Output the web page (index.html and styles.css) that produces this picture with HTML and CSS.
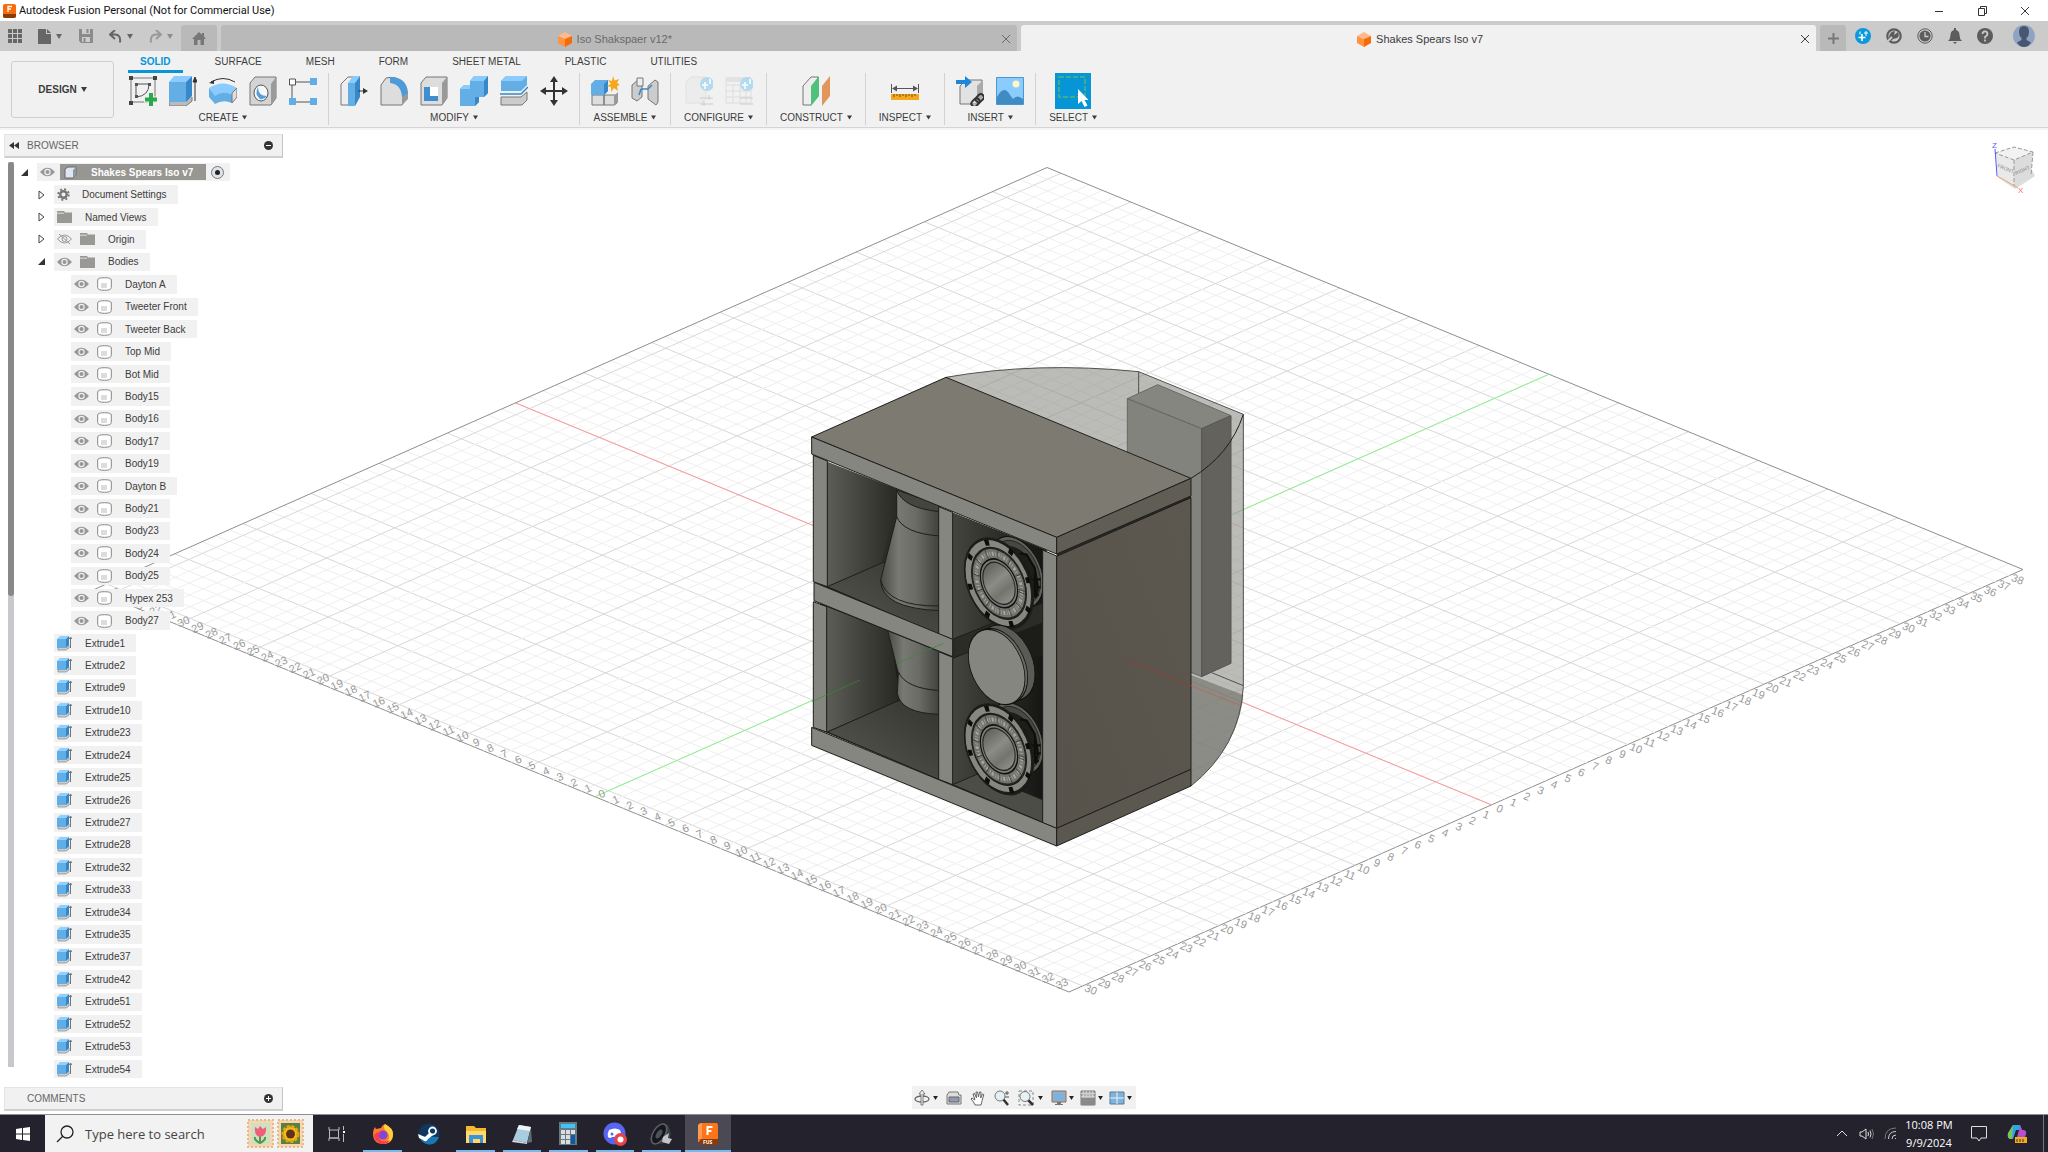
FILE: index.html
```
<!DOCTYPE html>
<html lang="en">
<head>
  <meta charset="UTF-8" />
  <meta name="viewport" content="width=device-width, initial-scale=1.0"/>
  <title>Autodesk Fusion Personal (Not for Commercial Use)</title>
  <link rel="stylesheet" href="styles.css">
</head>
<body>
  <!-- Shared icons -->
  <svg class="defs" width="0" height="0" aria-hidden="true">
    <symbol id="i-eye" viewBox="0 0 15 10"><path d="M0 5Q7.500-3.500 15 5Q7.500 13.500 0 5Z" fill="#979797"/><circle cx="7.500" cy="5" r="3.200" fill="#f1f1f1"/><circle cx="7.500" cy="5" r="2" fill="#979797"/></symbol>
    <symbol id="i-eye-off" viewBox="0 0 15 10"><path d="M.5 5Q7.500-3 14.500 5Q7.500 13 .5 5Z" fill="none" stroke="#999"/><circle cx="7.500" cy="5" r="2.500" fill="none" stroke="#999"/><path d="M2 0L13 10" stroke="#999"/></symbol>
    <symbol id="i-folder" viewBox="0 0 15 12"><path d="M0 0h7l1 1.500h7V12H0Z" fill="#999895"/><path d="M0 2.200h7" stroke="#f1f1f1" stroke-width=".8"/></symbol>
    <symbol id="i-body" viewBox="0 0 15 14"><path d="M.7 3Q.7.7 7.500.7T14.300 3v7.500q0 2.800-6.800 2.800T.7 10.500Z" fill="#fff" stroke="#888"/><path d="M4 6h6v5H4z" fill="#dcdcdc"/></symbol>
    <symbol id="i-extrude-s" viewBox="0 0 15 15"><path d="M1 12v2h8l3-2V9" fill="#ccc" stroke="#888" stroke-width=".7"/><path d="M0 3h9v9H0z" fill="#5faee8"/><path d="M0 3L3 0h9L9 3z" fill="#8fd0ff"/><path d="M9 3l3-3v9l-3 3z" fill="#3486c8"/><path d="M13.500 2v10M12 3l1.500-2L15 3" stroke="#555" fill="none" stroke-width=".8"/></symbol>
    <symbol id="i-gear" viewBox="0 0 14 14"><circle cx="7" cy="7" r="3.500" fill="none" stroke="#777" stroke-width="2.600"/><circle cx="7" cy="7" r="5.700" fill="none" stroke="#777" stroke-width="2" stroke-dasharray="2.200 2.270"/></symbol>
    <symbol id="i-open" viewBox="0 0 7 7"><path d="M7 0v7H0z" fill="#333"/></symbol>
    <symbol id="i-closed" viewBox="0 0 7 10"><path d="M1 1l5 4-5 4z" fill="#fff" stroke="#444"/></symbol>
    <symbol id="i-cube" viewBox="0 0 14 15"><path d="M0 4L7 0l7 4-7 3z" fill="#ffb98a"/><path d="M0 4l7 3v8l-7-4z" fill="#ff9440"/><path d="M14 4L7 7v8l7-4z" fill="#f76a08"/></symbol>
    <symbol id="i-x" viewBox="0 0 10 10"><path d="M1 1l8 8M9 1L1 9" stroke="currentColor" fill="none"/></symbol>
    <symbol id="i-down" viewBox="0 0 6 5"><path d="M0 0h6L3 5z" fill="currentColor"/></symbol>
  </svg>

  <header class="title-bar">
    <svg width="13" height="14" viewBox="0 0 13 14"><rect width="13" height="14" rx="2" fill="#f76b0a"/><path d="M0 10h13v2a2 2 0 0 1-2 2H2a2 2 0 0 1-2-2z" fill="#8a3a06"/><path d="M5 8V2.500h4M5 5h3" stroke="#fff" stroke-width="1.300" fill="none"/></svg>
    <h1>Autodesk Fusion Personal (Not for Commercial Use)</h1>
    <div class="window-buttons">
      <button type="button" aria-label="Minimize"><svg width="10" height="10"><path d="M1 5.500h8" stroke="#333"/></svg></button>
      <button type="button" aria-label="Restore"><svg width="10" height="10"><path d="M1.500 2.500h6v7h-6zM3.500 2.500v-2h6v7h-2" fill="none" stroke="#333"/></svg></button>
      <button type="button" aria-label="Close"><svg width="10" height="10"><use href="#i-x"/></svg></button>
    </div>
  </header>

  <div class="tab-bar">
    <div class="quick-access">
      <button type="button" aria-label="Data panel"><svg width="14" height="14" viewBox="0 0 14 14" fill="#666"><path d="M0 0h4v4H0zM5 0h4v4H5zM10 0h4v4h-4zM0 5h4v4H0zM5 5h4v4H5zM10 5h4v4h-4zM0 10h4v4H0zM5 10h4v4H5zM10 10h4v4h-4z"/></svg></button>
      <button type="button" class="with-arrow" aria-label="File"><svg width="13" height="15" viewBox="0 0 13 15"><path d="M0 0h8v5h5v10H0zM9 0l4 4H9z" fill="#666"/></svg><svg class="arrow" width="6" height="5"><use href="#i-down"/></svg></button>
      <button type="button" aria-label="Save"><svg width="14" height="14" viewBox="0 0 14 14"><path d="M0 0h14v14H2l-2-2z" fill="#8b8b8b"/><path d="M3 0h8v5H3zM3 8h8v5H3z" fill="#ccc"/><path d="M4.500 9h2v4h-2zM7.500 0h2v4h-2z" fill="#8b8b8b"/></svg></button>
      <button type="button" class="with-arrow" aria-label="Undo"><svg width="13" height="13" viewBox="0 0 13 13"><path d="M6 0L1 4.500 6 9M1 4.500h5q6 0 5 8" fill="none" stroke="#666" stroke-width="2"/></svg><svg class="arrow" width="6" height="5"><use href="#i-down"/></svg></button>
      <button type="button" class="with-arrow dim" aria-label="Redo"><svg width="13" height="13" viewBox="0 0 13 13"><path d="M7 0l5 4.500L7 9M12 4.500H7q-6 0-5 8" fill="none" stroke="#999" stroke-width="2"/></svg><svg class="arrow" width="6" height="5"><use href="#i-down"/></svg></button>
    </div>
    <button type="button" class="home-tab" aria-label="Home"><svg width="14" height="13" viewBox="0 0 14 13"><path d="M7 0l3 2.800V1h2v3.600L14 7h-2v6H8.500V8h-3v5H2V7H0z" fill="#777"/></svg></button>
    <div class="doc-tab">
      <svg width="14" height="15"><use href="#i-cube"/></svg><span>Iso Shakspaer v12*</span>
      <button type="button" aria-label="Close tab"><svg width="10" height="10"><use href="#i-x"/></svg></button>
    </div>
    <div class="doc-tab active">
      <svg width="14" height="15"><use href="#i-cube"/></svg><span>Shakes Spears Iso v7</span>
      <button type="button" aria-label="Close tab"><svg width="10" height="10"><use href="#i-x"/></svg></button>
    </div>
    <button type="button" class="new-tab" aria-label="New tab"><svg width="13" height="13"><path d="M6.500 1v11M1 6.500h11" stroke="#777" stroke-width="2"/></svg></button>
    <div class="account">
      <button type="button" aria-label="Extensions"><svg width="16" height="16" viewBox="0 0 16 16"><circle cx="8" cy="8" r="8" fill="#0d98dc"/><path d="M7 6v7M3.500 9.500h7" stroke="#fff" stroke-width="1.600"/><path d="M5 3.500v3M11 3v5M9 5h4" stroke="#fff"/></svg></button>
      <button type="button" aria-label="Updates"><svg width="16" height="16" viewBox="0 0 16 16"><circle cx="8" cy="8" r="6.700" fill="none" stroke="#5c5c5c" stroke-width="2.200"/><path d="M3 9q1-6 6-6l-1 4 4-3q2 4-1 6l-4 1-3 3z" fill="#5c5c5c"/><path d="M2 13l4-4" stroke="#ccc" stroke-width="2"/></svg></button>
      <button type="button" aria-label="Job status"><svg width="16" height="16" viewBox="0 0 16 16"><circle cx="8" cy="8" r="7.200" fill="none" stroke="#5c5c5c"/><circle cx="8" cy="8" r="5.600" fill="#5c5c5c"/><path d="M8 4v4.500h3.500" stroke="#ccc" stroke-width="1.300" fill="none"/></svg></button>
      <button type="button" aria-label="Notifications"><svg width="14" height="16" viewBox="0 0 14 16"><path d="M6 0h2v2q3.500 1 3.500 5 0 4 2.500 6H0q2.500-2 2.500-6Q2.500 3 6 2zM5 14h4l-2 2z" fill="#5c5c5c"/></svg></button>
      <button type="button" aria-label="Help"><svg width="16" height="16" viewBox="0 0 16 16"><circle cx="8" cy="8" r="8" fill="#5c5c5c"/><path d="M5.500 6q0-2.700 2.500-2.700T10.500 6Q10.500 7.500 8 9v1.500M8 11.500v2" stroke="#ccc" stroke-width="1.700" fill="none"/></svg></button>
      <button type="button" class="avatar" aria-label="Profile"><svg width="22" height="22" viewBox="0 0 22 22"><circle cx="11" cy="11" r="11" fill="#8fa3c2"/><path d="M11 1q5 0 5 6 0 4-2.500 6v2l4.500 2.500Q15 22 11 22t-7-4.500L8.500 15v-2Q6 11 6 7q0-6 5-6z" fill="#485672"/></svg></button>
    </div>
  </div>

  <section class="ribbon">
    <button type="button" class="workspace">DESIGN <svg width="6" height="5"><use href="#i-down"/></svg></button>
    <div class="ribbon-main">
      <nav class="ribbon-tabs">
        <a href="#" class="active">SOLID</a>
        <a href="#">SURFACE</a>
        <a href="#">MESH</a>
        <a href="#">FORM</a>
        <a href="#">SHEET METAL</a>
        <a href="#">PLASTIC</a>
        <a href="#">UTILITIES</a>
      </nav>
      <div class="groups">
        <div class="group">
          <div class="tools">
            <button type="button" aria-label="Create sketch"><svg viewBox="0 0 28 30"><path d="M2 2h24v24H2z" fill="none" stroke="#777"/><g fill="#444"><path d="M0 0h4v4H0zM24 0h4v4h-4zM0 25h4v4H0z"/></g><path d="M7 8h13q0 12-13 13z" fill="none" stroke="#555"/><path d="M6 7h3v3H6zM19 7h3v3h-3zM6 19h3v3H6z" fill="#555"/><path d="M22 15v15M15 23.500h14" stroke="#f1f1f1" stroke-width="6"/><path d="M22 17v13M16 23.500h12" stroke="#2aa84a" stroke-width="4"/></svg></button>
            <button type="button" aria-label="Extrude"><svg viewBox="0 0 28 30"><path d="M0 26v4h17l6-5v-4" fill="#bbb" stroke="#777"/><path d="M0 6h17v20H0z" fill="#64aee6"/><path d="M0 6l5-6h18l-6 6z" fill="#8accff"/><path d="M17 6l6-6v20l-6 6z" fill="#3788c8"/><path d="M26 3v22M24 6l2-5 2 5z" stroke="#333" fill="#333"/></svg></button>
            <button type="button" aria-label="Revolve"><svg viewBox="0 0 28 30"><path d="M2 6Q14-1 26 6" fill="none" stroke="#333"/><path d="M0 7l5-3v4z" fill="#333"/><path d="M0 12Q14 3 28 12l-5 8q-9-5-17 1z" fill="#8accff"/><path d="M0 12l6 8q8-6 17-1v8q-9-4-17 1l-6-7z" fill="#64aee6"/><path d="M23 17l5-5v9l-5 6z" fill="#ddd" stroke="#777"/></svg></button>
            <button type="button" aria-label="Hole"><svg viewBox="0 0 28 30"><path d="M1 7l5-6h21v21l-5 7H1z" fill="#d4d4d4" stroke="#777"/><path d="M22 8l5-7v21l-5 7z" fill="#9a9a9a"/><ellipse cx="12" cy="17" rx="7" ry="8" fill="#f7f7f7" stroke="#555"/><path d="M9 11q0 9 9 9-3 4-7 3-6-5-2-12z" fill="#559fdb"/></svg></button>
            <button type="button" aria-label="Pattern"><svg viewBox="0 0 28 30"><path d="M7 6h14M3 9v13M7 26h14" stroke="#555"/><path d="M.5 3h6v6h-6z" fill="#fff" stroke="#555"/><path d="M21 2h7v7h-7zM0 22h7v7H0zM21 22h7v7h-7z" fill="#5faee8"/></svg></button>
          </div>
          <button type="button" class="menu">CREATE <svg width="5" height="5"><use href="#i-down"/></svg></button>
        </div>
        <div class="group">
          <div class="tools">
            <button type="button" aria-label="Press pull"><svg viewBox="0 0 28 30"><path d="M1 8l7-7h5v20l-5 8H1z" fill="#eee" stroke="#777"/><path d="M8 7h7v23H8z" fill="#64aee6"/><path d="M8 7l5-7h7l-5 7z" fill="#8accff"/><path d="M15 7l5-7v21l-5 9z" fill="#3788c8"/><path d="M18 15h6" stroke="#333"/><path d="M23 12l5 3-5 3z" fill="#333"/></svg></button>
            <button type="button" aria-label="Fillet"><svg viewBox="0 0 28 30"><path d="M1 29V9l5-7q18-4 22 18l-6 9z" fill="#ddd" stroke="#777"/><path d="M22 20l6-4v7l-6 6z" fill="#999"/><path d="M10 1q17 0 18 16l-6 4Q21 8 10 7z" fill="#4d9bd8"/></svg></button>
            <button type="button" aria-label="Shell"><svg viewBox="0 0 28 30"><path d="M1 7l5-6h21v21l-5 7H1z" fill="#ddd" stroke="#777"/><path d="M22 7l5-6v21l-5 7z" fill="#999"/><path d="M4 11h14v14H4z" fill="#fff"/><path d="M4 11h6v9h8v5H4z" fill="#3f8fd0"/></svg></button>
            <button type="button" aria-label="Combine"><svg viewBox="0 0 28 30"><path d="M0 13l4-4h6V5l4-5h14v17l-4 4h-5v5l-4 4H0z" fill="#64aee6"/><path d="M10 5l4-5h14l-4 5zM0 13l4-4h6v4z" fill="#8accff"/><path d="M24 5l4-5v17l-4 4h-5v5l-4 4v-9h9z" fill="#3788c8"/></svg></button>
            <button type="button" aria-label="Split body"><svg viewBox="0 0 28 30"><path d="M1 21h20l6-5v8l-5 5H1z" fill="#ccc" stroke="#777"/><path d="M1 5l5-5h21v9l-6 6H1z" fill="#64aee6"/><path d="M1 5l5-5h21l-5 5z" fill="#8accff"/><path d="M0 18h21l7-7" stroke="#3788c8" fill="none" stroke-width="1.500"/></svg></button>
            <button type="button" aria-label="Move"><svg viewBox="0 0 28 30"><path d="M14 4v22M3 15h22" stroke="#333" stroke-width="2"/><path d="M14 0l4 6h-8zM14 30l4-6h-8zM0 15l6-4v8zM28 15l-6-4v8z" fill="#333"/></svg></button>
          </div>
          <button type="button" class="menu">MODIFY <svg width="5" height="5"><use href="#i-down"/></svg></button>
        </div>
        <div class="group">
          <div class="tools">
            <button type="button" aria-label="New component"><svg viewBox="0 0 28 30"><path d="M1 19h12v10H1zM13 19h13v8l-3 2H13z" fill="#ddd" stroke="#777"/><path d="M23 20l4-4v10l-4 4z" fill="#999"/><path d="M0 8l4-4h13v11l-4 4H0z" fill="#64aee6"/><path d="M13 8l4-4v11l-4 4z" fill="#3788c8"/><path d="M22 0l1.500 4.500L28 3l-2 4 4 2-4 1 1 5-4-3-3 4v-5l-4-1 4-2-3-4 4 1z" fill="#f5a81c"/></svg></button>
            <button type="button" aria-label="Joint"><svg viewBox="0 0 28 30"><path d="M1 9l6-5 4 2v15l-5 4-5-3zM17 10l7-6 3 2v20l-2 3-8-6z" fill="#ccc" stroke="#777"/><path d="M6 2h6v8H6z" fill="#eee" stroke="#777"/><path d="M10 13h7M17 13l4-4M10 13l-2 6" stroke="#3788c8" stroke-width="1.500" fill="none"/></svg></button>
          </div>
          <button type="button" class="menu">ASSEMBLE <svg width="5" height="5"><use href="#i-down"/></svg></button>
        </div>
        <div class="group">
          <div class="tools">
            <button type="button" aria-label="Configured design" disabled><svg viewBox="0 0 28 30"><path d="M1 6l5-5h15v20l-4 6H1z" fill="#ececec" stroke="#e0e0e0"/><path d="M15 22h13M15 28h13M24 19v5M19 25v5" stroke="#ccc"/><circle cx="22" cy="8" r="7" fill="#b4daf0"/><path d="M20 6v7M17 9h6M25 3v5" stroke="#fff" stroke-width="1.500"/></svg></button>
            <button type="button" aria-label="Configuration table" disabled><svg viewBox="0 0 28 30"><path d="M1 3h25v24H1zM1 9h25M1 15h25M1 21h25M8 9v18M15 9v18M21 9v18" fill="none" stroke="#ddd"/><path d="M1 1h25v5H1z" fill="#e2e2e2"/><path d="M15 22h13M15 28h13" stroke="#ccc"/><circle cx="22" cy="8" r="7" fill="#b4daf0"/><path d="M20 6v7M17 9h6M25 3v5" stroke="#fff" stroke-width="1.500"/></svg></button>
          </div>
          <button type="button" class="menu">CONFIGURE <svg width="5" height="5"><use href="#i-down"/></svg></button>
        </div>
        <div class="group">
          <div class="tools">
            <button type="button" aria-label="Offset plane"><svg viewBox="0 0 28 30"><path d="M1 10l8-9h7v19l-7 9H1z" fill="#eee" stroke="#777"/><path d="M9 10l8-10v20L9 30z" fill="#50c07a"/><path d="M20 10l8-10v20l-8 10z" fill="#e3965c"/></svg></button>
          </div>
          <button type="button" class="menu">CONSTRUCT <svg width="5" height="5"><use href="#i-down"/></svg></button>
        </div>
        <div class="group">
          <div class="tools">
            <button type="button" aria-label="Measure"><svg viewBox="0 0 28 30"><path d="M.5 8v9M27.500 8v9M2 12.500h24" stroke="#555"/><path d="M1 12.500l5-3v6zM27 12.500l-5-3v6z" fill="#555"/><path d="M0 18h28v6H0z" fill="#f3a81d"/><path d="M3 18v3M6 18v2M9 18v3M12 18v2M15 18v3M18 18v2M21 18v3M24 18v2" stroke="#6c5117"/></svg></button>
          </div>
          <button type="button" class="menu">INSPECT <svg width="5" height="5"><use href="#i-down"/></svg></button>
        </div>
        <div class="group">
          <div class="tools">
            <button type="button" aria-label="Insert derive"><svg viewBox="0 0 28 30"><path d="M4 10l6-6h16v16l-5 8H4z" fill="#e2e2e2" stroke="#777"/><path d="M21 10l6-6v17l-6 7z" fill="#aaa"/><path d="M0 4h9V0l7 6-7 6V8H0z" fill="#1d86d8"/><g transform="rotate(-45 22 24)" fill="none" stroke="#333" stroke-width="2"><rect x="14" y="21" width="9" height="6" rx="3"/><rect x="20" y="21" width="9" height="6" rx="3"/></g></svg></button>
            <button type="button" aria-label="Insert canvas"><svg viewBox="0 0 28 30"><path d="M.5 1.500h27v27H.5z" fill="#8bccff" stroke="#4a96d0"/><circle cx="20" cy="8" r="3.500" fill="#fff7c8"/><path d="M1 21Q8 8 14 19l3 4q4-5 10 0v5H1z" fill="#3f8cc5"/></svg></button>
          </div>
          <button type="button" class="menu">INSERT <svg width="5" height="5"><use href="#i-down"/></svg></button>
        </div>
        <div class="group">
          <div class="tools">
            <button type="button" class="selected" aria-label="Select"><svg viewBox="0 0 36 36"><path d="M4 4h26v20H4z" fill="none" stroke="#3fae8c" stroke-width="2" stroke-dasharray="5 2"/><path d="M23 16v15l3.500-3 3 6 3-1.500-3-5.500h4z" fill="#fff"/></svg></button>
          </div>
          <button type="button" class="menu">SELECT <svg width="5" height="5"><use href="#i-down"/></svg></button>
        </div>
      </div>
    </div>
  </section>

  <main class="viewport">
    <svg class="scene" viewBox="0 130 2048 984" preserveAspectRatio="xMidYMid slice">
      <defs>
        <linearGradient id="wall"><stop offset="0" stop-color="#5c5d57"/><stop offset="1" stop-color="#262622"/></linearGradient>
        <linearGradient id="floor" x1="0" y1="1" x2="1" y2="0"><stop offset="0" stop-color="#5a5a54"/><stop offset="1" stop-color="#34342f"/></linearGradient>
        <linearGradient id="cone"><stop offset="0" stop-color="#4a4a46"/><stop offset=".3" stop-color="#787973"/><stop offset=".6" stop-color="#6a6b65"/><stop offset="1" stop-color="#3f403b"/></linearGradient>
        <linearGradient id="shade" x1="0" y1="0" x2="1" y2="0"><stop offset="0" stop-color="#45453f"/><stop offset="1" stop-color="#151513"/></linearGradient>
        <linearGradient id="dome" x1="0" y1="0" x2="1" y2="1"><stop offset="0" stop-color="#4e4e49"/><stop offset=".45" stop-color="#8b8c86"/><stop offset=".65" stop-color="#73746e"/><stop offset="1" stop-color="#a2a39d"/></linearGradient>
        <linearGradient id="side" x1="1" y1="0" x2="0" y2="1"><stop offset="0" stop-color="#5c5850"/><stop offset="1" stop-color="#57534b"/></linearGradient>
        <g id="driver">
          <g transform="matrix(.84 .34 0 1.050 678 668)"><circle r="98" fill="#5f605b" stroke="#111" stroke-width="3"/><circle r="88" fill="#484843" stroke="#111" stroke-width="2"/><circle r="70" fill="#1d1d1a"/></g>
          <path d="M690 610l20 4 24 40 10 60-8 30M700 640l24 50M735 670v70M728 688h24M730 712h22M726 735h20" fill="none" stroke="#0e0e0c" stroke-width="7"/>
          <g transform="matrix(1.030 .42 0 1.280 627 700)">
            <circle r="101" fill="#1b1b19"/>
            <circle cx="-2" r="97" fill="#868780"/>
            <circle r="80" fill="#262623"/>
            <circle r="66" fill="none" stroke="#73746e" stroke-width="20"/>
            <circle r="66" fill="none" stroke="#a4a59e" stroke-width="9" stroke-dasharray="6 4 2 5"/>
            <circle r="66" fill="none" stroke="#33332f" stroke-width="18" stroke-dasharray="2 32"/>
            <circle r="54" fill="#7a7b75" stroke="#111" stroke-width="3"/>
            <circle r="47" fill="url(#dome)" stroke="#222" stroke-width="3"/>
            <circle r="91" fill="none" stroke="#0d0d0b" stroke-width="13" stroke-dasharray="13 58.500" stroke-dashoffset="-28"/>
          </g>
        </g>
      </defs>
      <g id="grid"></g>

      <!-- Speaker cabinet -->
      <g transform="translate(790 350) scale(.33333)" stroke="#1d1d1b" stroke-width="3" stroke-linejoin="round">
        <path d="M468 82Q740 34 1046 65L1360 193V1010Q1350 1190 1203 1308V385z" fill="#8d8e87" fill-opacity=".6" stroke="none"/>
        <path d="M1203 975l157 60Q1345 1190 1203 1308z" fill="#777871" fill-opacity=".7" stroke="none"/>
        <path d="M468 82Q740 34 1046 65L1360 193V1010Q1350 1190 1203 1308M1046 65v75M1265 968l95 39" fill="none" stroke="#50504c"/>
        <path d="M1012 146l91-42 220 93-88 39z" fill="#858680" stroke="#666"/>
        <path d="M1012 146l223 90v744l-223-90z" fill="#82837d" stroke="#666"/>
        <path d="M1235 236l88-39v743l-88 40z" fill="#63625d" stroke="#555"/>
        <path d="M1360 193Q1320 315 1203 385" fill="none"/>
        <path d="M800 590l403-177v60L800 650z" fill="#2a2925" stroke="none"/>
        <path d="M65 261L468 82l735 303-403 177z" fill="#7d7a71"/>
        <path d="M90 330L770 600V1425L90 1140z" fill="#1c1c19" stroke="none"/>

        <!-- Left bays -->
        <path d="M112 335L330 420V640L112 710z" fill="url(#wall)" stroke="none"/>
        <path d="M330 420l120 50v250l-175-85z" fill="#2b2b27" stroke="none"/>
        <path d="M112 710l168-73 170 60v158z" fill="url(#floor)"/>
        <path d="M320 415v85L272 690q0 85 178 92V470z" fill="url(#cone)"/>
        <path d="M320 420q20 55 130 65V465z" fill="#45453f"/>
        <path d="M320 500q20 50 130 58M272 690q20 80 178 78" fill="none"/>
        <path d="M110 770L300 845l30 205-220 96z" fill="url(#wall)" stroke="none"/>
        <path d="M112 1146l218-96 120 40v200z" fill="url(#floor)"/>
        <path d="M293 842l32 128-3 60q10 60 128 63V905z" fill="url(#cone)"/>
        <path d="M325 965q20 50 125 57" fill="none"/>

        <!-- Right bays -->
        <path d="M488 488l272 112v220L600 822 488 868z" fill="url(#shade)" stroke="none"/>
        <path d="M488 925l60-25 212 20v445l-200-90-72 29z" fill="url(#shade)" stroke="none"/>
        <path d="M488 868l272-110v60L488 925z" fill="#2b2b28"/>
        <path d="M488 1304l80-34 192 80v68z" fill="#4d4d48"/>
        <use href="#driver"/>
        <use href="#driver" y="498"/>
        <g transform="matrix(.85 .35 0 1.070 650 938)"><circle r="100" fill="#5a5b56" stroke="#111" stroke-width="3"/></g>
        <g transform="matrix(.85 .35 0 1.070 628 948)"><circle r="100" fill="#6a6b65" stroke="#111" stroke-width="3"/></g>
        <g transform="matrix(.85 .35 0 1.070 620 951)"><circle r="100" fill="#858680" stroke="#111" stroke-width="3"/></g>

        <!-- Frame -->
        <g fill="#858680">
          <path d="M70 316l42 17v377l-42-15zM70 755l40 15v376l-40-14z"/>
          <path d="M446 470l42 17v381l-42-16zM446 905l42 17v382l-42-16z"/>
          <path d="M72 697l416 171v52L72 752z"/>
          <path d="M758 600l42 18v817l-42-17z"/>
          <path d="M65 261l735 301v50L65 312z"/>
          <path d="M65 1132l735 303v53L65 1186z"/>
        </g>
        <path d="M800 562l403-177v53L800 612z" fill="#605d55"/>
        <path d="M800 619l403-176v815L800 1435z" fill="url(#side)"/>
        <path d="M800 1435l403-177v50L800 1488z" fill="#5b5850"/>
        <path d="M1008 929l195 78" stroke="#9c3a22" stroke-width="2"/>
        <path d="M1203 1007l152 61" stroke="#c0604c" stroke-width="2"/>
        <path d="M320 940l140-60M65 1055l145-65" stroke="#368a30" stroke-width="2"/>
      </g>

      <!-- View cube -->
      <g class="view-cube">
        <path d="M1999 178l16 11 20-13-3-6z" fill="#ddd"/>
        <path d="M1995 153l19-6 19 5-19 8z" fill="#f2f2f2"/>
        <path d="M1995 153l19 7v26l-16-9z" fill="#e9e9e9"/>
        <path d="M2033 152l-19 8v26l17-10z" fill="#dcdcdc"/>
        <path d="M1995 153l19-6 19 5-19 8zM2014 160v26M2033 152l-2 24" fill="none" stroke="#999" stroke-dasharray="4 2"/>
        <path d="M1995 149l2 27" stroke="#5a5aff"/>
        <path d="M1997 176l21 12" stroke="#e8a070"/>
        <text x="1992" y="148" fill="#5a5aff">Z</text>
        <text x="2018" y="193" fill="#ff6a6a">X</text>
        <text class="face" transform="translate(1997 167) rotate(22)">FRONT</text>
        <text class="face" transform="translate(2016 175) rotate(-24)">RIGHT</text>
      </g>
    </svg>

    <aside class="browser">
      <div class="panel-bar">
        <svg width="10" height="7"><path d="M5 0v7L0 3.500zM10 0v7L5 3.500z" fill="#333"/></svg>
        <h2>BROWSER</h2>
        <button type="button" aria-label="Collapse"><svg width="9" height="9"><circle cx="4.500" cy="4.500" r="4.500" fill="#333"/><path d="M2 4.500h5" stroke="#fff"/></svg></button>
      </div>
      <div class="tree-wrap">
        <div class="scrollbar"><div class="thumb"></div></div>
        <ul class="tree" id="tree">
          <li class="root">
            <svg class="twisty" width="7" height="7"><use href="#i-open"/></svg>
            <div class="node">
              <svg width="15" height="10"><use href="#i-eye"/></svg>
              <span class="current"><svg width="13" height="13" viewBox="0 0 13 13"><path d="M1 3l3-2h8v8l-3 3H1z" fill="#dfe6ee" stroke="#667"/><path d="M9 4l3-3v8l-3 3z" fill="#8e98a4"/></svg>Shakes Spears Iso v7</span>
              <svg width="13" height="13"><circle cx="6.500" cy="6.500" r="6" fill="#dde4ee" stroke="#777"/><circle cx="6.500" cy="6.500" r="2.500" fill="#222"/></svg>
            </div>
          </li>
          <li class="level-1"><svg class="twisty" width="7" height="10"><use href="#i-closed"/></svg><div class="node gear"><svg width="13" height="13"><use href="#i-gear"/></svg>Document Settings</div></li>
          <li class="level-1"><svg class="twisty" width="7" height="10"><use href="#i-closed"/></svg><div class="node"><svg class="type" width="15" height="12"><use href="#i-folder"/></svg>Named Views</div></li>
          <li class="level-1"><svg class="twisty" width="7" height="10"><use href="#i-closed"/></svg><div class="node"><svg width="15" height="10"><use href="#i-eye-off"/></svg><svg class="type" width="15" height="12"><use href="#i-folder"/></svg>Origin</div></li>
          <li class="level-1"><svg class="twisty" width="7" height="7"><use href="#i-open"/></svg><div class="node"><svg width="15" height="10"><use href="#i-eye"/></svg><svg class="type" width="15" height="12"><use href="#i-folder"/></svg>Bodies</div></li>
        </ul>
      </div>
      <div class="panel-bar">
        <h2>COMMENTS</h2>
        <button type="button" aria-label="Expand"><svg width="9" height="9"><circle cx="4.500" cy="4.500" r="4.500" fill="#333"/><path d="M2 4.500h5M4.500 2v5" stroke="#fff"/></svg></button>
      </div>
    </aside>

    <div class="nav-bar">
      <button type="button" class="orbit" aria-label="Orbit"><svg width="16" height="16" viewBox="0 0 16 16"><ellipse cx="8" cy="9" rx="7" ry="3" fill="none" stroke="#666" stroke-width="1.300"/><path d="M8 0l3 4H9v11H7V4H5z" fill="#eee" stroke="#666" stroke-width=".8"/></svg><svg class="arrow" width="5" height="4"><use href="#i-down"/></svg></button>
      <button type="button" aria-label="Look at"><svg width="16" height="16" viewBox="0 0 16 16"><path d="M1 5l2-3h9l1 3h2v9H1z" fill="#ddd" stroke="#777"/><path d="M3 7h10v5H3z" fill="#8f9bb0" stroke="#666"/></svg></button>
      <button type="button" aria-label="Pan"><svg width="16" height="16" viewBox="0 0 16 16"><path d="M5 15q-1-3-4-6l1-1 3 2-2-6 1.500-.5L6.500 8 6 2h1.500L8.500 7l1-5H11l-.3 6L12.500 4l1.300.5Q12 11 11 15z" fill="#fff" stroke="#666"/></svg></button>
      <button type="button" aria-label="Zoom"><svg width="16" height="16" viewBox="0 0 16 16"><path d="M9 9l5 6" stroke="#333" stroke-width="2.500"/><circle cx="6" cy="6" r="5" fill="#e6f1f6" stroke="#777"/><path d="M13 1v4M11 3h4M11 7h4" stroke="#555"/></svg></button>
      <button type="button" aria-label="Fit"><svg width="16" height="16" viewBox="0 0 16 16"><path d="M1 1h14v14H1z" fill="none" stroke="#888" stroke-dasharray="3 2"/><path d="M10 10l5 5" stroke="#333" stroke-width="2.500"/><circle cx="7" cy="6.500" r="5" fill="#e6f1f6" stroke="#777"/></svg><svg class="arrow" width="5" height="4"><use href="#i-down"/></svg></button>
      <button type="button" class="tight" aria-label="Display settings"><svg width="16" height="16" viewBox="0 0 16 16"><path d="M1 1h14v11H1z" fill="#aaa" stroke="#777"/><path d="M3 3h10v7H3z" fill="#79b3e6"/><path d="M6 12h4v2h2v1H4v-1h2z" fill="#777"/></svg><svg class="arrow" width="5" height="4"><use href="#i-down"/></svg></button>
      <button type="button" class="tight" aria-label="Grid settings"><svg width="16" height="16" viewBox="0 0 16 16"><path d="M1 1h14v14H1z" fill="#b4b4b4" stroke="#777"/><path d="M1 8h14v7H1z" fill="#8a8a8a"/><path d="M1 3.500h14M1 6.500h14M3.500 1v7M6.500 1v7M9.500 1v7M12.500 1v7" stroke="#d8d8d8" stroke-width=".7"/></svg><svg class="arrow" width="5" height="4"><use href="#i-down"/></svg></button>
      <button type="button" class="tight" aria-label="Viewports"><svg width="16" height="16" viewBox="0 0 16 16"><path d="M1 2h14v12H1z" fill="#7fb2dc" stroke="#567a99"/><path d="M8 2v12M1 8h14" stroke="#e8f2fa"/></svg><svg class="arrow" width="5" height="4"><use href="#i-down"/></svg></button>
    </div>
  </main>

  <footer class="taskbar">
    <button type="button" class="start" aria-label="Start"><svg width="14" height="14" viewBox="0 0 14 14" fill="#fff"><path d="M0 2l6-1v5.500H0zM7 .9L14 0v6.500H7zM0 7.500h6V13l-6-1zM7 7.500h7V14l-7-1z"/></svg></button>
    <label class="search">
      <svg width="18" height="18" viewBox="0 0 18 18"><circle cx="11" cy="7" r="6" fill="none" stroke="#222" stroke-width="1.300"/><path d="M7 11l-6 6" stroke="#222" stroke-width="1.300"/></svg>
      <input type="text" placeholder="Type here to search" />
      <svg width="27" height="29" viewBox="0 0 27 29"><path d="M1 1h25v27H1z" fill="#f4d7b0" stroke="#e8b988" stroke-width="2" stroke-dasharray="2 2"/><path d="M4 4h19v21H4z" fill="#cfe0c0"/><path d="M13 25V16M13 24q-6-3-5-6M13 24q6-3 5-6" stroke="#4c9a4a" stroke-width="2" fill="none"/><path d="M8 8l3 2 2-3 3 3 3-2q1 9-6 10-6-1-5-10z" fill="#ef5f78"/></svg>
      <svg width="27" height="29" viewBox="0 0 27 29"><path d="M1 1h25v27H1z" fill="#f4d7b0" stroke="#e8b988" stroke-width="2" stroke-dasharray="2 2"/><path d="M4 4h19v21H4z" fill="#5a8040"/><circle cx="13.500" cy="15" r="7.500" fill="#f5c21c" stroke="#e9a013" stroke-width="3" stroke-dasharray="3 1.500"/><circle cx="13.500" cy="15" r="4.500" fill="#63321a"/></svg>
    </label>
    <div class="apps">
      <button type="button" aria-label="Task view"><svg width="17" height="16" viewBox="0 0 17 16"><path d="M1 1v3h10V1M1 15v-3h10v3M1.500 4v8h9V4M15.500 0v4M15.500 8v8" fill="none" stroke="#bbb"/><path d="M15 5h2v2h-2z" fill="#fff"/></svg></button>
      <button type="button" class="open" aria-label="Firefox"><svg width="22" height="22" viewBox="0 0 22 22"><path d="M13 1q2 1 3 4 3 0 5 4 1 12-10 12Q1 21 1 10q0-3 2-6l1 2 5-1q1-3 4-4z" fill="#ff7a2a"/><path d="M13 1q8 4 8 10 0 9-10 10 7-3 6-9-1-3-4-5-2-3 0-6z" fill="#ffd23c"/><circle cx="11" cy="12" r="4.500" fill="#8344d8"/><path d="M2 12q1 8 9 9 5 0 7-4-8 4-11-2-1-4 2-5-4-2-7 2z" fill="#f53b55"/></svg></button>
      <button type="button" aria-label="Steam"><svg width="22" height="22" viewBox="0 0 22 22"><circle cx="11" cy="11" r="10.500" fill="#10375f"/><path d="M1 13q3 8 10 8.500T21 14z" fill="#1a76b4"/><circle cx="14.500" cy="8" r="3.500" fill="none" stroke="#fff" stroke-width="1.800"/><path d="M0 11l7 3 5-5 3 3-5 4q-2 4-5 1l-4-2z" fill="#fff"/></svg></button>
      <button type="button" class="open" aria-label="File Explorer"><svg width="22" height="20" viewBox="0 0 22 20"><path d="M1 2h8l2 2h10v15H1z" fill="#f4b92c"/><path d="M1 7h20v12H1z" fill="#ffd969"/><path d="M4 11h14v8h-3v-4H8v4H4z" fill="#3a93dc"/></svg></button>
      <button type="button" class="open" aria-label="Notepad"><svg width="22" height="22" viewBox="0 0 22 22"><path d="M8 2l12 2-4 16-14-3z" fill="#a9cde0"/><path d="M8 2l12 2-1 4L6 6z" fill="#eef3f5"/><path d="M16 20l4-15 1 14z" fill="#5c6c74"/><path d="M2 17l14 3v1L1 19z" fill="#ddd"/></svg></button>
      <button type="button" class="open" aria-label="Calculator"><svg width="18" height="23" viewBox="0 0 18 23"><path d="M0 0h18v23H0z" fill="#667985"/><path d="M2 2h14v4H2z" fill="#40c4f5"/><path d="M2 8h4v4H2zM7 8h4v4H7zM12 8h4v4h-4zM2 13h4v4H2zM7 13h4v4H7zM2 18h4v4H2zM7 18h4v4H7z" fill="#ddd"/><path d="M12 13h4v9h-4z" fill="#0b5ba8"/></svg></button>
      <button type="button" class="open" aria-label="Discord"><svg width="24" height="24" viewBox="0 0 24 24"><circle cx="11.500" cy="11.500" r="11" fill="#5865f2"/><path d="M6 8q6-3 11 0 2 5 1 7-3 2-4 0H9q-2 2-4 0-1-3 1-7z" fill="#fff"/><circle cx="9" cy="12" r="1.500" fill="#5865f2"/><circle cx="17.500" cy="17.500" r="6.500" fill="#e2464a"/><circle cx="17.500" cy="17.500" r="3" fill="#fff"/></svg></button>
      <button type="button" class="open" aria-label="Speaker Workshop"><svg width="24" height="24" viewBox="0 0 24 24"><path d="M15 1l4 2 3 8-2 10-14 1z" fill="#3a3d44"/><ellipse cx="10" cy="12" rx="6" ry="11" transform="rotate(32 10 12)" fill="#15171c" stroke="#5b6069" stroke-width="1.500"/><ellipse cx="10" cy="12" rx="2.500" ry="5" transform="rotate(32 10 12)" fill="#4c515c"/><path d="M14 15l6-4-1 5 4 1-3 5-7-2z" fill="#c3c5c8"/></svg></button>
      <button type="button" class="open current-app" aria-label="Fusion"><svg width="22" height="24" viewBox="0 0 22 24"><path d="M1 3l2-2h17l1 2v17H1z" fill="#ff7416"/><path d="M1 3l4-2v16H1z" fill="#ff9a52"/><path d="M4 17h17v4q0 2-2 2H5q-2 0-3-3z" fill="#8b3b08"/><path d="M10.500 13V5h5M10.500 9h4" stroke="#fff" stroke-width="2" fill="none"/></svg><span>FUS</span></button>
    </div>
    <div class="tray">
      <button type="button" aria-label="Show hidden icons"><svg width="12" height="7"><path d="M1 6l5-5 5 5" fill="none" stroke="#ddd"/></svg></button>
      <button type="button" aria-label="Volume"><svg width="15" height="12" viewBox="0 0 15 12"><path d="M1 4h2l4-3v10L3 8H1z" fill="none" stroke="#ddd"/><path d="M9 4q1 2 0 4M11 2.500q2 3.500 0 7" fill="none" stroke="#ddd"/><path d="M13 1q3 5 0 10" fill="none" stroke="#777"/></svg></button>
      <button type="button" aria-label="Network"><svg width="13" height="13" viewBox="0 0 13 13" fill="none" stroke="#ccc"><path d="M11.500 11v1M8 12q0-4 4-4M4.500 12q0-7.500 7.500-7.500"/><path d="M1 12Q1 1 12 1" stroke="#777"/></svg></button>
      <div class="clock"><time>10:08 PM</time><time>9/9/2024</time></div>
      <button type="button" class="wide" aria-label="Notifications"><svg width="16" height="16" viewBox="0 0 16 16"><path d="M.5.500h15v11.500H10l-2 3-2-3H.5z" fill="none" stroke="#ddd"/></svg></button>
      <button type="button" class="wide" aria-label="Copilot"><svg width="20" height="20" viewBox="0 0 20 20"><path d="M6 1h7l2 5H9l-3 9H3q-3-1-2-5z" fill="#27a6e8"/><path d="M1 9l5-8-1 14H3q-3-1-2-6z" fill="#7fc25a"/><path d="M13 1l2 5h2q3 1 2 4l-2 6H9l3-10z" fill="#b54fd0"/><path d="M8 13h12v6H8z" fill="#f5ab1e"/><path d="M10 15v3M13 15v3M16 15v3" stroke="#333"/></svg></button>
      <button type="button" class="show-desktop" aria-label="Show desktop"></button>
    </div>
  </footer>

  <script>
    const SVG_NS = 'http://www.w3.org/2000/svg';
    const tree = document.getElementById('tree');
    const bodies = ['Dayton A', 'Tweeter Front', 'Tweeter Back', 'Top Mid', 'Bot Mid', 'Body15', 'Body16', 'Body17',
      'Body19', 'Dayton B', 'Body21', 'Body23', 'Body24', 'Body25', 'Hypex 253', 'Body27'];
    const extrudes = [1, 2, 9, 10, 23, 24, 25, 26, 27, 28, 32, 33, 34, 35, 37, 42, 51, 52, 53, 54];

    // Function to add one row to the browser tree
    function addRow(className, html) {
      const row = document.createElement('li');
      row.className = className;
      row.innerHTML = `<span class="twisty"></span><div class="node">${html}</div>`;
      tree.appendChild(row);
    }

    bodies.forEach(name => {
      addRow('level-2', `<svg width="15" height="10"><use href="#i-eye"/></svg><svg class="type" width="15" height="14"><use href="#i-body"/></svg>${name}`);
    });
    extrudes.forEach(n => {
      addRow('level-1', `<svg class="type" width="15" height="15"><use href="#i-extrude-s"/></svg>Extrude${n}`);
    });

    // Ground plane: 70 x 70 units seen from the front right corner
    const SIZE = 70;
    const corner = { x: 1069, y: 992 };
    const u = { x: 976 / SIZE, y: 402 / SIZE };
    const v = { x: 954 / SIZE, y: -422.5 / SIZE };
    const originU = 34;
    const originV = 31;
    const grid = document.getElementById('grid');

    // a units back along the left edge, b units up along the right edge
    function point(a, b) {
      return { x: corner.x - a * u.x + b * v.x, y: corner.y - a * u.y + b * v.y };
    }

    function drawLine(p, q, className) {
      const line = document.createElementNS(SVG_NS, 'line');
      line.setAttribute('x1', p.x);
      line.setAttribute('y1', p.y);
      line.setAttribute('x2', q.x);
      line.setAttribute('y2', q.y);
      line.setAttribute('class', className);
      grid.appendChild(line);
    }

    function drawLabel(p, angle, value) {
      const text = document.createElementNS(SVG_NS, 'text');
      text.setAttribute('transform', `translate(${p.x} ${p.y}) rotate(${angle})`);
      text.setAttribute('dy', 4);
      text.textContent = value;
      grid.appendChild(text);
    }

    function lineClass(i, origin) {
      if (i === 0 || i === SIZE) return 'edge';
      return (i - origin) % 5 === 0 ? 'major' : 'minor';
    }

    for (let i = 0; i <= SIZE; i++) {
      drawLine(point(i, 0), point(i, SIZE), lineClass(i, originU));
      drawLine(point(0, i), point(SIZE, i), lineClass(i, originV));
    }
    drawLine(point(0, originV), point(SIZE, originV), 'axis-x');
    drawLine(point(originU, 0), point(originU, SIZE), 'axis-y');

    for (let i = 1; i < SIZE; i++) {
      drawLabel(point(i, 0.5), -24, Math.abs(originU - i));
      drawLabel(point(-0.6, i), 22, Math.abs(originV - i));
    }
  </script>
</body>
</html>
```
FILE: styles.css
```
:root {
  --bar: #cbcbcb;
  --tab: #b9b9b9;
  --panel: #f1f1f1;
  --text: #3c3c3c;
  --accent: #0696d7;
  --taskbar: #24222c;
}

* {
  box-sizing: border-box;
}

body {
  margin: 0;
  height: 100vh;
  display: flex;
  flex-direction: column;
  overflow: hidden;
  background-color: white;
  color: var(--text);
  font-family: "Liberation Sans", Arial, sans-serif;
  font-size: 10px;
}

button {
  border: none;
  background: none;
  padding: 0;
  font: inherit;
  color: inherit;
  display: flex;
  align-items: center;
  justify-content: center;
}

svg {
  display: block;
  flex-shrink: 0;
}

.defs {
  position: absolute;
}

/* Title bar */
.title-bar {
  height: 21px;
  display: flex;
  align-items: center;
  padding: 0 2px 0 3px;
  gap: 3px;
}

.title-bar h1 {
  margin: 0;
  flex: 1;
  color: #111;
  font-family: Roboto, "Open Sans", sans-serif;
  font-size: 11px;
  font-weight: normal;
}

.window-buttons {
  display: flex;
}

.window-buttons button {
  width: 43px;
  height: 21px;
}

/* Document tabs */
.tab-bar {
  height: 30px;
  display: flex;
  align-items: stretch;
  gap: 4px;
  padding-top: 4px;
  background-color: var(--bar);
}

.quick-access {
  width: 177px;
  display: flex;
  align-items: center;
  justify-content: space-between;
  padding: 0 4px 4px 8px;
  color: #666;
}

.with-arrow {
  gap: 5px;
}

.dim {
  color: #8c8c8c;
}

.home-tab,
.new-tab {
  width: 36px;
  background-color: var(--tab);
  border-radius: 3px 3px 0 0;
}

.new-tab {
  width: 26px;
}

.doc-tab {
  flex: 1;
  display: flex;
  align-items: center;
  justify-content: center;
  gap: 5px;
  padding: 2px 6px 0 0;
  background-color: var(--tab);
  border-radius: 3px 3px 0 0;
  color: #6a6a6a;
  font-size: 11px;
}

.doc-tab span {
  flex: 1;
}

.doc-tab::before {
  content: "";
  flex: 0 0 42%;
}

.doc-tab.active {
  background-color: var(--panel);
  color: var(--text);
}

.account {
  display: flex;
  align-items: center;
  gap: 15px;
  padding: 0 13px 4px 5px;
}

.avatar {
  margin-left: 5px;
}

/* Ribbon */
.ribbon {
  height: 77px;
  display: flex;
  background-color: var(--panel);
  border-bottom: 1px solid #d4d4d4;
}

.workspace {
  width: 103px;
  height: 57px;
  margin: 10px 4px 0 11px;
  gap: 4px;
  border: 1px solid #cfcfcf;
  border-radius: 3px;
  font-weight: bold;
}

.ribbon-tabs {
  display: flex;
  gap: 20px;
  padding-left: 10px;
}

.ribbon-tabs a {
  height: 22px;
  padding: 4px 12px 0;
  border-bottom: 3px solid transparent;
  color: var(--text);
  text-decoration: none;
  line-height: 14px;
}

.ribbon-tabs a.active {
  color: var(--accent);
  border-color: var(--accent);
  font-weight: bold;
}

.groups {
  display: flex;
}

.group {
  padding: 0 11px;
  display: flex;
  flex-direction: column;
  align-items: center;
  border-right: 1px solid #d2d2d2;
}

.group:last-child {
  border-right: none;
}

.tools {
  height: 36px;
  display: flex;
  align-items: center;
  gap: 12px;
}

.tools svg {
  width: 28px;
  height: 30px;
}

.tools .selected,
.selected svg {
  width: 36px;
  height: 36px;
}

.tools .selected {
  background-color: var(--accent);
}

.menu {
  height: 16px;
  padding: 0 2px;
  gap: 4px;
}

/* Canvas */
.viewport {
  flex: 1;
  min-height: 0;
  position: relative;
  border-top: 2px solid #f5f5f5;
}

.scene {
  width: 100%;
  height: 100%;
}

.minor {
  stroke: #efefef;
}

.major {
  stroke: #d8d8d8;
}

.edge {
  stroke: #8e8e8e;
}

.axis-x {
  stroke: #ff9a9a;
}

.axis-y {
  stroke: #8cf58c;
}

#grid text {
  fill: #999;
  font-size: 11px;
  text-anchor: middle;
}

.view-cube text {
  font-size: 8px;
}

.view-cube .face {
  font-size: 5px;
  fill: #888;
}

/* Browser panel */
.browser {
  position: absolute;
  top: 4px;
  bottom: 3px;
  left: 4px;
  width: 279px;
  display: flex;
  flex-direction: column;
}

.panel-bar {
  height: 24px;
  flex-shrink: 0;
  display: flex;
  align-items: center;
  padding: 0 9px 0 4px;
  background-color: var(--panel);
  border: 1px solid #e4e4e4;
  border-right: 1px solid #c4c4c4;
  border-bottom: 2px solid #cfcfcf;
}

.panel-bar h2 {
  margin: 0;
  flex: 1;
  padding-left: 8px;
  color: #666;
  font-size: 10px;
  font-weight: normal;
}

.panel-bar h2:first-child {
  padding-left: 18px;
}

.tree-wrap {
  flex: 1;
  min-height: 0;
  display: flex;
  margin: 3px 0 7px;
}

.scrollbar {
  width: 6px;
  margin: 1px 0 13px 4px;
  background-color: #c8c7cc;
}

.thumb {
  height: 48%;
  background-color: #888;
  border-radius: 3px;
}

.tree {
  margin: 0;
  padding: 0;
  list-style: none;
  display: flex;
  flex-direction: column;
}

.tree li {
  flex: 1;
  min-height: 0;
  display: flex;
  align-items: center;
  padding: 2px 0 2px 7px;
}

.tree .level-1 {
  padding-left: 24px;
}

.tree .level-2 {
  padding-left: 41px;
}

.twisty {
  width: 7px;
  margin-right: 9px;
}

.node {
  align-self: stretch;
  display: flex;
  align-items: center;
  gap: 8px;
  padding: 0 11px 0 3px;
  background-color: var(--panel);
  white-space: nowrap;
}

.node .type {
  margin-right: 5px;
}

.node.gear {
  gap: 12px;
}

.root .node {
  gap: 5px;
  padding-right: 6px;
}

.current {
  height: 16px;
  display: flex;
  align-items: center;
  gap: 14px;
  padding: 0 13px 0 4px;
  background-color: #979692;
  color: white;
  font-weight: bold;
}

/* Navigation bar */
.nav-bar {
  position: absolute;
  left: 50%;
  bottom: 5px;
  transform: translateX(-50%);
  height: 23px;
  display: flex;
  align-items: center;
  gap: 8px;
  padding: 0 4px 0 2px;
  background-color: var(--panel);
  color: #222;
}

.nav-bar button {
  gap: 4px;
}

.nav-bar .orbit {
  gap: 3px;
}

.nav-bar .tight {
  gap: 2px;
}

.tight + .tight {
  margin-left: -2px;
}

/* Taskbar */
.taskbar {
  height: 38px;
  display: flex;
  background-color: var(--taskbar);
  border-top: 1px solid #8e8d92;
  color: white;
  font-family: "Open Sans", "Noto Sans", sans-serif;
}

.start {
  width: 45px;
}

.search {
  width: 268px;
  display: flex;
  align-items: center;
  gap: 3px;
  padding: 0 9px 0 11px;
  background-color: #f2f2f2;
}

.search input {
  flex: 1;
  min-width: 0;
  margin-left: 8px;
  padding: 0;
  border: none;
  outline: none;
  background: none;
  font-family: inherit;
  font-size: 13px;
}

.search input::placeholder {
  color: #444;
  opacity: 1;
}

.apps {
  width: 418px;
  display: flex;
}

.apps button {
  flex: 1;
  position: relative;
}

.apps .open::after {
  content: "";
  position: absolute;
  left: 4px;
  right: 4px;
  bottom: 0;
  height: 2px;
  background-color: #76b9ed;
}

.apps .current-app {
  background-color: #4b4953;
}

.apps .current-app::after {
  left: 0;
  right: 0;
}

.current-app span {
  position: absolute;
  bottom: 7px;
  font-size: 5px;
  font-weight: bold;
  line-height: 6px;
}

.tray {
  margin-left: auto;
  display: flex;
  align-items: stretch;
}

.tray button {
  width: 24px;
}

.clock {
  width: 54px;
  margin-right: 4px;
  display: flex;
  flex-direction: column;
  align-items: center;
  justify-content: center;
  font-size: 11px;
  line-height: 18px;
}

.tray .wide {
  width: 38px;
}

.tray .show-desktop {
  width: 5px;
  margin-left: 7px;
  border-left: 1px solid #77757c;
}
```
